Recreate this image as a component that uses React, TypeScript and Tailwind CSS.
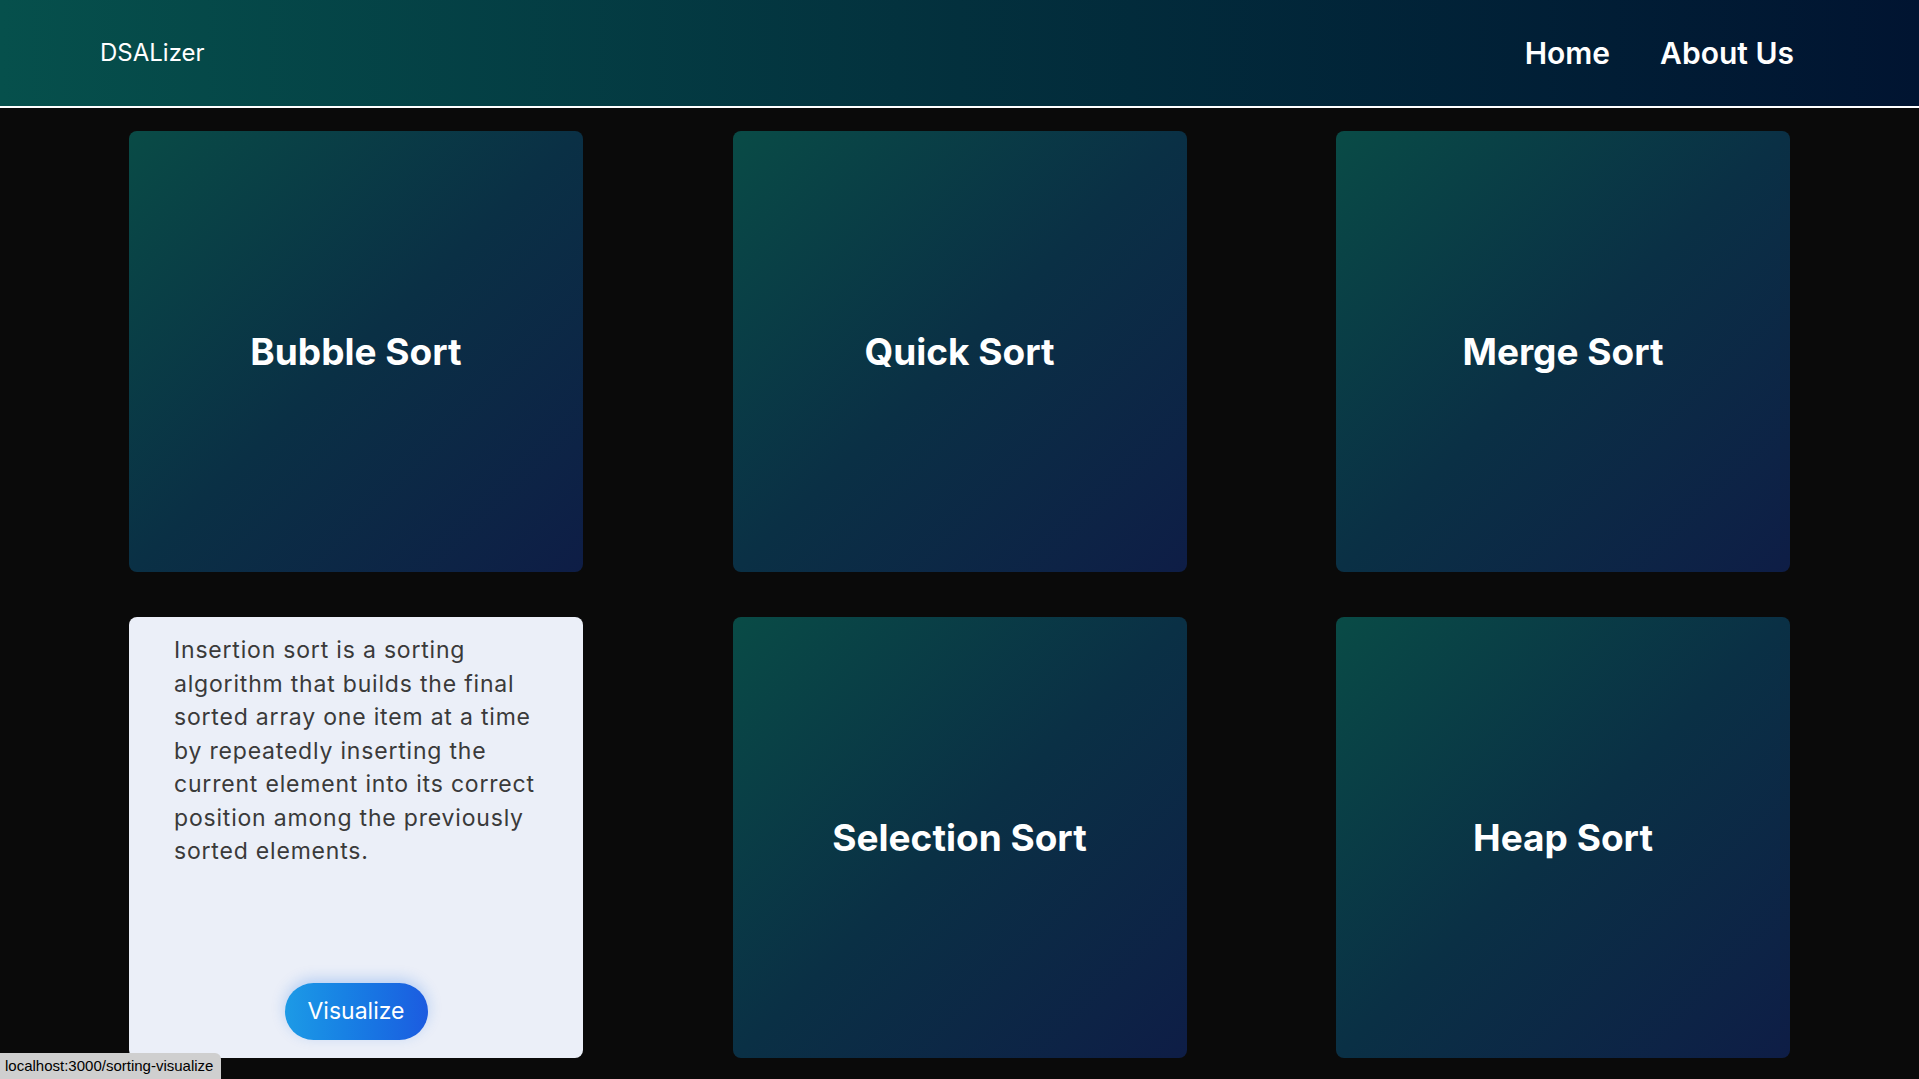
import React from 'react';

const algos = [
  { name: 'Bubble Sort' },
  { name: 'Quick Sort' },
  { name: 'Merge Sort' },
  {
    name: 'Insertion Sort',
    lines: [
      'Insertion sort is a sorting',
      'algorithm that builds the final',
      'sorted array one item at a time',
      'by repeatedly inserting the',
      'current element into its correct',
      'position among the previously',
      'sorted elements.',
    ],
    open: true,
  },
  { name: 'Selection Sort' },
  { name: 'Heap Sort' },
];

const Navbar = () => (
  <nav className="flex items-center justify-between h-[108px] px-[100px] border-b-2 border-white bg-gradient-to-r from-[#06504c] via-[#03303d] to-[#011431]">
    <span className="text-white text-[24px] font-normal">DSALizer</span>
    <div className="flex items-center gap-[50px] pr-[25px] text-white text-[30px] font-semibold">
      <a href="#">Home</a>
      <a href="#">About Us</a>
    </div>
  </nav>
);

const Card = ({ name, lines, open }: { name: string; lines?: string[]; open?: boolean }) => {
  if (open) {
    return (
      <div className="h-[441px] rounded-lg bg-[#ebeff8] flex flex-col justify-between px-[45px] pt-[17px] pb-[18px]">
        <p className="text-[23px] leading-[33.5px] text-[#3a3a3a] tracking-[0.035em]">
          {lines?.map((l) => (
            <span key={l} className="block whitespace-nowrap">{l}</span>
          ))}
        </p>
        <div className="flex justify-center">
          <button className="w-[143px] h-[57px] rounded-full bg-gradient-to-r from-[#1d9ae6] to-[#1c5be0] text-white text-[23px] shadow-[0_-4px_14px_rgba(29,110,230,0.25)]">
            Visualize
          </button>
        </div>
      </div>
    );
  }
  return (
    <div className="h-[441px] rounded-lg bg-gradient-to-br from-[#094b46] via-[#0a3045] to-[#0e1d46] flex items-center justify-center">
      <h2 className="text-white text-[37px] font-bold">{name}</h2>
    </div>
  );
};

const App = () => {
  return (
    <div className="min-h-screen bg-[#0a0a0a] font-['Inter','Noto_Sans',sans-serif]">
      <Navbar />
      <main className="grid grid-cols-[repeat(3,454px)] justify-between gap-y-[45px] px-[129px] pt-[23px] pb-[40px]">
        {algos.map((a) => (
          <Card key={a.name} name={a.name} lines={a.lines} open={a.open} />
        ))}
      </main>
      <div className="fixed bottom-0 left-0 h-[26px] w-[221px] rounded-tr-md bg-[#cfcfcf] px-[5px] flex items-center text-[15px] text-black font-['Liberation_Sans','DejaVu_Sans',sans-serif]">
        localhost:3000/sorting-visualize
      </div>
    </div>
  );
};

export default App;
